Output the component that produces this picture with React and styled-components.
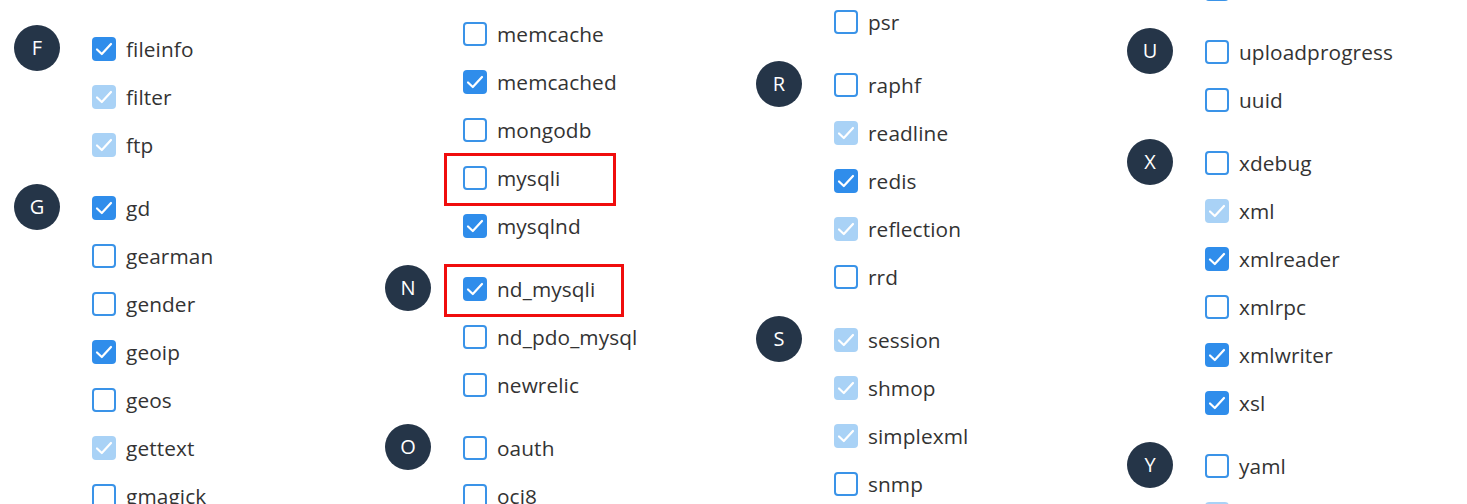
import React from "react";
import styled, { createGlobalStyle } from "styled-components";

const GlobalStyle = createGlobalStyle`
  html, body {
    margin: 0;
    padding: 0;
    background: #ffffff;
  }
  body {
    font-family: "Open Sans", "Noto Sans", sans-serif;
    color: #333333;
    overflow: hidden;
  }
`;

const Page = styled.div`
  width: 1467px;
  height: 504px;
  overflow: hidden;
  display: grid;
  grid-template-columns: repeat(4, 371px);
  padding-left: 14px;
  box-sizing: border-box;
`;

const Column = styled.div`
  display: flex;
  flex-direction: column;
  gap: 15px;
  margin-top: ${({ $offset }) => `${$offset}px`};
`;

const Group = styled.div`
  display: flex;
  align-items: flex-start;
  gap: 32px;
`;

const Letter = styled.div`
  flex: 0 0 46px;
  height: 46px;
  border-radius: 50%;
  background: #253548;
  color: #ffffff;
  display: flex;
  align-items: center;
  justify-content: center;
  font-size: 20px;
  line-height: 1;
`;

const Items = styled.div`
  display: flex;
  flex-direction: column;
`;

const Item = styled.label`
  position: relative;
  height: 48px;
  display: flex;
  align-items: center;
  gap: 10px;
  font-size: 20.8px;
  letter-spacing: 0.1px;
  color: #333333;
`;

const Highlight = styled.span`
  position: absolute;
  left: -19px;
  top: -1px;
  width: ${({ $w }) => `${$w}px`};
  height: 53px;
  border: 3px solid #f00d0d;
  box-sizing: border-box;
  pointer-events: none;
`;

const Box = styled.span`
  flex: 0 0 24px;
  height: 24px;
  box-sizing: border-box;
  border-radius: 4px;
  display: flex;
  align-items: center;
  justify-content: center;
  background: ${({ $state }) =>
    $state === "on" ? "#2f8deb" : $state === "locked" ? "#a9d2f6" : "#ffffff"};
  border: ${({ $state }) => ($state === "off" ? "2px solid #3a93e8" : "none")};
`;

const Check = () => (
  <svg width="24" height="24" viewBox="0 0 24 24" fill="none">
    <path
      d="M5 12.5 L9.8 17 L19 7"
      stroke="#ffffff"
      strokeWidth="2.2"
      strokeLinecap="round"
      strokeLinejoin="round"
    />
  </svg>
);

const columns = [
  {
    offset: -86,
    groups: [
      { letter: "E", items: [["enchant", "off"], ["exif", "locked"]] },
      { letter: "F", items: [["fileinfo", "on"], ["filter", "locked"], ["ftp", "locked"]] },
      {
        letter: "G",
        items: [
          ["gd", "on"],
          ["gearman", "off"],
          ["gender", "off"],
          ["geoip", "on"],
          ["geos", "off"],
          ["gettext", "locked"],
          ["gmagick", "off"],
        ],
      },
    ],
  },
  {
    offset: -134,
    groups: [
      {
        letter: "M",
        items: [
          ["mailparse", "off"],
          ["mbstring", "locked"],
          ["maxminddb", "on"],
          ["memcache", "off"],
          ["memcached", "on"],
          ["mongodb", "off"],
          ["mysqli", "off", 172],
          ["mysqlnd", "on"],
        ],
      },
      {
        letter: "N",
        items: [["nd_mysqli", "on", 180], ["nd_pdo_mysql", "off"], ["newrelic", "off"]],
      },
      { letter: "O", items: [["oauth", "off"], ["oci8", "off"], ["odbcnative", "off"]] },
    ],
  },
  {
    offset: -98,
    groups: [
      { letter: "P", items: [["posix", "locked"], ["pspell", "off"], ["psr", "off"]] },
      {
        letter: "R",
        items: [
          ["raphf", "off"],
          ["readline", "locked"],
          ["redis", "on"],
          ["reflection", "locked"],
          ["rrd", "off"],
        ],
      },
      {
        letter: "S",
        items: [
          ["session", "locked"],
          ["shmop", "locked"],
          ["simplexml", "locked"],
          ["snmp", "off"],
          ["soap", "on"],
        ],
      },
    ],
  },
  {
    offset: -131,
    groups: [
      { letter: "T", items: [["tidy", "off"], ["timezonedb", "off"], ["tokenizer", "off"]] },
      { letter: "U", items: [["uploadprogress", "off"], ["uuid", "off"]] },
      {
        letter: "X",
        items: [
          ["xdebug", "off"],
          ["xml", "locked"],
          ["xmlreader", "on"],
          ["xmlrpc", "off"],
          ["xmlwriter", "on"],
          ["xsl", "on"],
        ],
      },
      { letter: "Y", items: [["yaml", "off"], ["yar", "locked"]] },
    ],
  },
];

export default function App() {
  return (
    <>
      <GlobalStyle />
      <Page>
        {columns.map((col, ci) => (
          <Column key={ci} $offset={col.offset}>
            {col.groups.map((g) => (
              <Group key={g.letter}>
                <Letter>{g.letter}</Letter>
                <Items>
                  {g.items.map(([name, state, mark]) => (
                    <Item key={name}>
                      <Box $state={state}>{state !== "off" && <Check />}</Box>
                      {name}
                      {mark && <Highlight $w={mark} />}
                    </Item>
                  ))}
                </Items>
              </Group>
            ))}
          </Column>
        ))}
      </Page>
    </>
  );
}
